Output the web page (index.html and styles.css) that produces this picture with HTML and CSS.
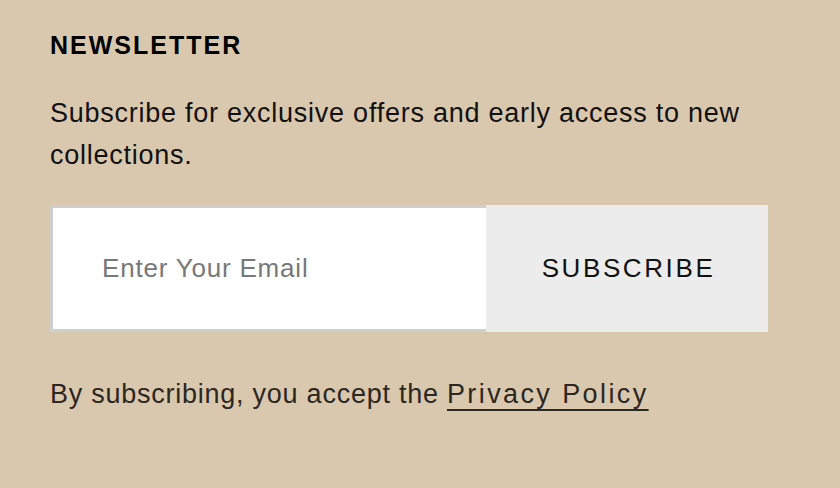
FILE: index.html
```html
<!DOCTYPE html>
<html lang="en">
<head>
  <meta charset="UTF-8">
  <meta name="viewport" content="width=device-width, initial-scale=1.0">
  <title>Newsletter</title>
  <link rel="stylesheet" href="styles.css">
</head>
<body>

  <!-- Newsletter -->
  <div class="newsletter">
    <h2 class="newsletter-title">NEWSLETTER</h2>
    <p class="newsletter-text">Subscribe for exclusive offers and early access to new collections.</p>

    <form class="newsletter-form" onsubmit="return false">
      <input type="email" class="newsletter-input" placeholder="Enter Your Email">
      <button type="submit" class="newsletter-btn">SUBSCRIBE</button>
    </form>

    <p class="newsletter-note">By subscribing, you accept the <a href="#" class="privacy-link">Privacy Policy</a></p>
  </div>

</body>
</html>
```

FILE: styles.css
```css
body {
  margin: 0;
  padding: 0;
  background-color: #dac8ae;
  font-family: 'Liberation Sans', Arial, sans-serif;
  color: #111;
}

.newsletter {
  padding: 30px 50px;
}

.newsletter-title {
  margin: 0;
  font-size: 25px;
  font-weight: 700;
  letter-spacing: 2px;
  line-height: 30px;
  color: #000;
}

.newsletter-text {
  margin: 32px 0 0;
  max-width: 720px;
  font-size: 27px;
  line-height: 42px;
  letter-spacing: 0.75px;
}

/* Formulário */
.newsletter-form {
  display: flex;
  margin-top: 29px;
  width: 718px;
}

.newsletter-input {
  flex: 1;
  height: 127px;
  box-sizing: border-box;
  padding: 0 49px;
  border: 3px solid #cfcfcf;
  border-right: none;
  background-color: #fff;
  font-family: inherit;
  font-size: 26px;
  letter-spacing: 0.8px;
  outline: none;
}

.newsletter-input::placeholder {
  color: #787878;
}

.newsletter-btn {
  width: 284px;
  height: 127px;
  padding: 0 0 0 3px;
  border: none;
  background-color: #ececec;
  font-family: inherit;
  font-size: 26px;
  letter-spacing: 2.6px;
  color: #111;
  cursor: pointer;
}

.newsletter-note {
  margin: 46px 0 0;
  font-size: 27px;
  line-height: 32px;
  color: #2b2722;
  letter-spacing: 0.75px;
}

.privacy-link {
  color: #2b2722;
  letter-spacing: 2.4px;
  text-decoration: underline;
  text-decoration-thickness: 2px;
  text-underline-offset: 6px;
}
```
